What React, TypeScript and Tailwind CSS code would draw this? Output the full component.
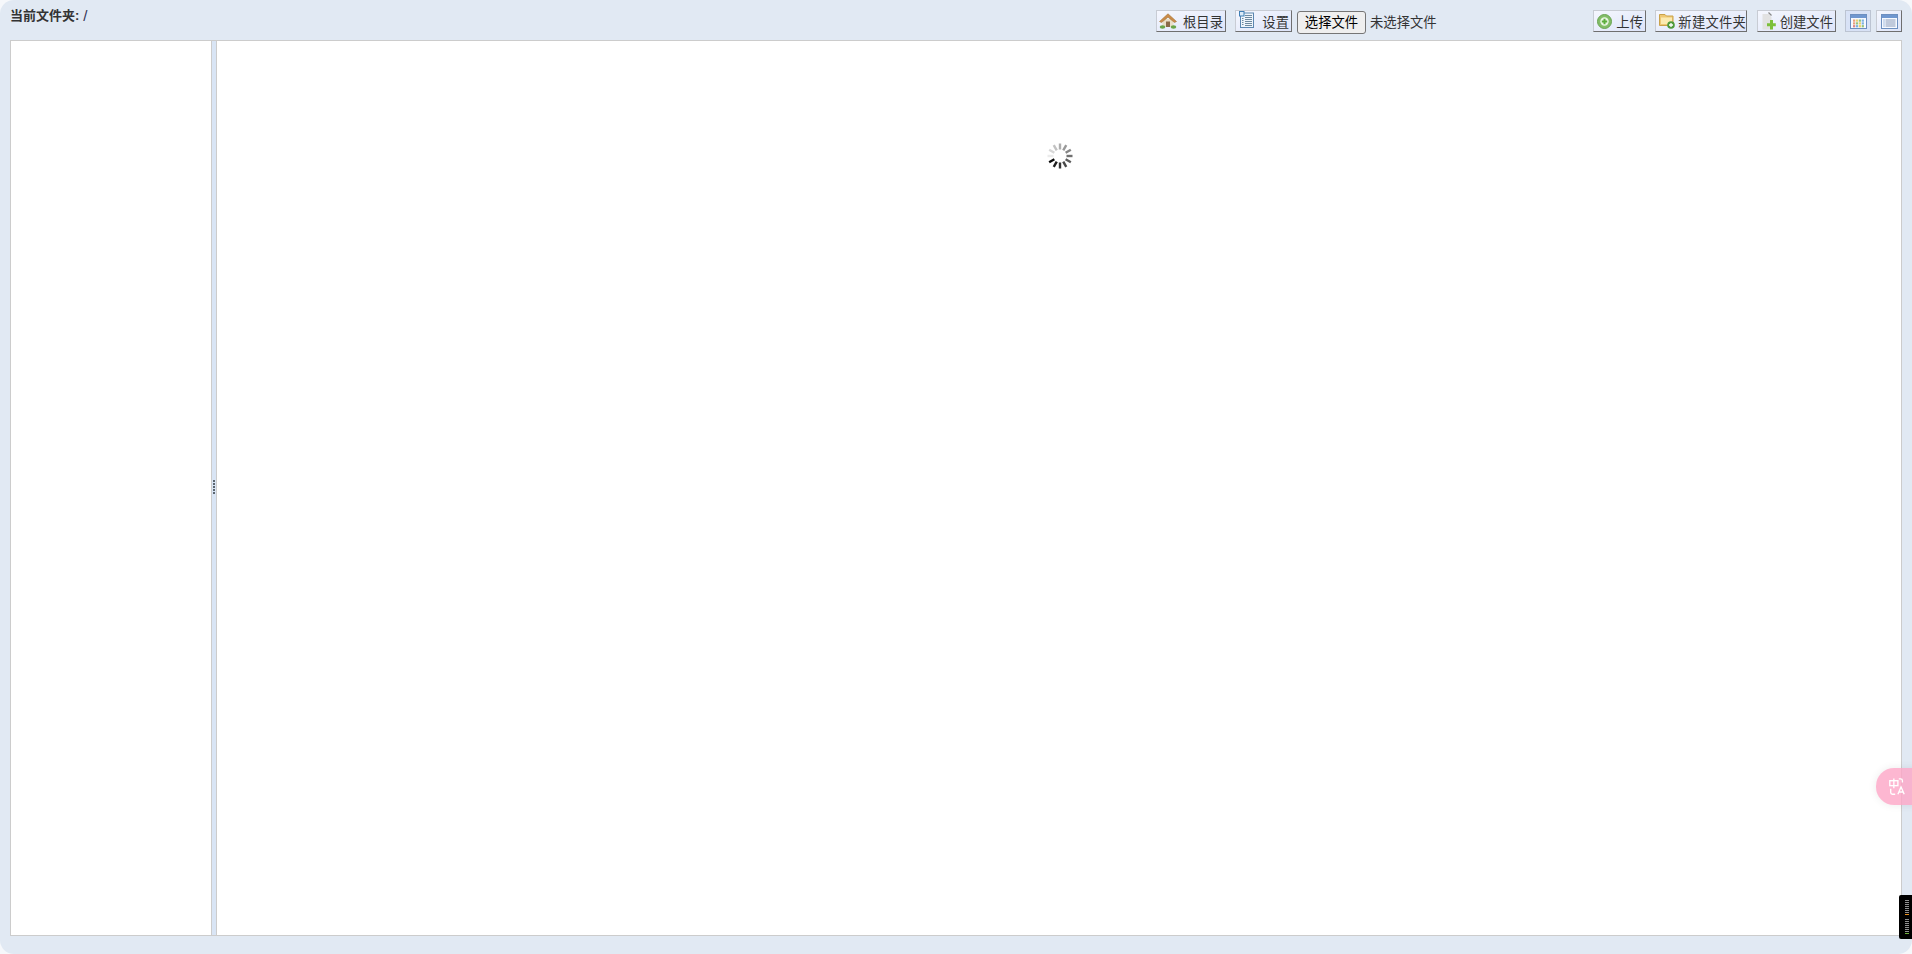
import React from "react";

const font = { fontFamily: '"Liberation Sans","Noto Sans CJK SC",sans-serif' };

function Home() {
  return (
    <svg width="18" height="16" viewBox="0 0 18 16" className="shrink-0">
      <rect x="3.5" y="6" width="11" height="8" fill="#eadfc8" />
      <rect x="7" y="8.5" width="4" height="5.5" fill="#8a6a48" />
      <path d="M0.5 8.5 L9 0.8 L17.5 8.5 L15.5 9.5 L9 4.2 L2.5 9.5 Z" fill="#c98a4a" stroke="#a87838" strokeWidth="0.6" />
      <ellipse cx="3.5" cy="14" rx="2.8" ry="1.7" fill="#6aa548" />
      <ellipse cx="14.5" cy="14" rx="2.8" ry="1.7" fill="#6aa548" />
    </svg>
  );
}
function Settings() {
  return (
    <svg width="15" height="17" viewBox="0 0 15 17" className="shrink-0">
      <rect x="1.5" y="2" width="13" height="14.5" fill="#eef4fb" stroke="#5c87b0" />
      <rect x="0.5" y="0.5" width="4.5" height="4.5" fill="#dcebf8" stroke="#3f7fb5" />
      <path d="M6 4.5h7M6 6.5h7M6 8.5h7M6 10.5h7M6 12.5h7M6 14.5h7M3 7.5h1.5M3 9.5h1.5M3 11.5h1.5M3 13.5h1.5" stroke="#6f8a9f" />
    </svg>
  );
}
function Upload() {
  return (
    <svg width="15" height="15" viewBox="0 0 15 15" className="shrink-0">
      <circle cx="7.5" cy="7.5" r="7" fill="#83bd68" stroke="#6aa452" />
      <circle cx="7.5" cy="7.5" r="4.2" fill="#eaf6e4" />
      <path d="M7.5 4.8v5.4M4.8 7.5h5.4" stroke="#5cae3c" strokeWidth="2" />
    </svg>
  );
}
function NewFolder() {
  return (
    <svg width="16" height="16" viewBox="0 0 16 16" className="shrink-0">
      <path d="M0.5 1.5h5.5l1.5 1.5h6.5v9.5H0.5Z" fill="#eec872" stroke="#c9a24a" />
      <rect x="2" y="4.5" width="11" height="6.5" fill="#fbeab0" />
      <circle cx="12" cy="12" r="3.8" fill="#4f9a3c" />
      <path d="M12 10v4M10 12h4" stroke="#fff" strokeWidth="1.3" />
    </svg>
  );
}
function NewFile() {
  return (
    <svg width="14" height="18" viewBox="0 0 14 18" className="shrink-0">
      <path d="M0.5 17.5V2h6l3 3v12.5Z" fill="#e2e2e2" />
      <path d="M6.5 0.5l3 3" stroke="#888" strokeWidth="1.2" />
      <path d="M9.5 8v9.5M5 12.7h8.8" stroke="#7cc03a" strokeWidth="3" />
    </svg>
  );
}
function GridView() {
  const c = ["#e88a5c", "#e8c84c", "#7cb85c", "#5ca0d8", "#e88a5c", "#7cb85c", "#e8c84c", "#5ca0d8", "#d86a6a", "#5ca0d8", "#e8c84c", "#7cb85c"];
  return (
    <svg width="17" height="15" viewBox="0 0 17 15">
      <rect x="0.5" y="0.5" width="16" height="14" fill="#f6f9ff" stroke="#6d8fc0" />
      <rect x="1" y="1" width="15" height="3" fill="#6f97d0" />
      {c.map((f, i) => (
        <rect key={i} x={3 + (i % 4) * 2.9} y={5.5 + Math.floor(i / 4) * 2.8} width="2.2" height="2.2" fill={f} opacity="0.8" />
      ))}
    </svg>
  );
}
function ListView() {
  return (
    <svg width="17" height="15" viewBox="0 0 17 15">
      <rect x="0.5" y="0.5" width="16" height="14" fill="#f6f9ff" stroke="#6d8fc0" />
      <rect x="1" y="1" width="15" height="3" fill="#6f97d0" />
      <path d="M4.5 6h10M4.5 8h10M4.5 10h10M4.5 12h10" stroke="#8a9ab8" />
      <path d="M2.5 6h1M2.5 8h1M2.5 10h1M2.5 12h1" stroke="#5a86c0" />
    </svg>
  );
}

function Tool({ icon, label, cls }: { icon: React.ReactNode; label: string; cls: string }) {
  return (
    <div
      className={`flex h-[22px] items-center justify-between border border-t-[#c8ccd4] border-l-[#c8ccd4] border-r-[#6f6f6f] border-b-[#6f6f6f] bg-linear-to-br from-[#f5f7fe] to-[#dde4f9] text-[13.33px] leading-none text-[#333] ${cls}`}
    >
      {icon}
      <span className="pt-[4px]">{label}</span>
    </div>
  );
}

function Spinner() {
  const spokes = Array.from({ length: 12 }, (_, i) => i);
  return (
    <svg width="26" height="26" viewBox="-13 -13 26 26">
      {spokes.map((i) => {
        const a = (i * 30 * Math.PI) / 180;
        const order = (8 - i + 12) % 12;
        const grey = Math.round(10 + (order / 11) * 225);
        return (
          <line
            key={i}
            x1={Math.sin(a) * 6.5}
            y1={-Math.cos(a) * 6.5}
            x2={Math.sin(a) * 12.5}
            y2={-Math.cos(a) * 12.5}
            stroke={`rgb(${grey},${grey},${grey})`}
            strokeWidth="2.4"
          />
        );
      })}
    </svg>
  );
}

export default function App() {
  return (
    <div style={font} className="relative h-[954px] w-[1912px] overflow-hidden bg-[#f6f8fb]">
      <div className="flex h-full flex-col rounded-[14px] bg-[#e1e9f3] pl-[10px] pr-[10px] pb-[18px]">
        <header className="flex h-[40px] shrink-0 items-start">
          <div className="mt-[8px] flex w-[1146px] shrink-0 items-center text-[13px] leading-[16px] text-[#333]">
            <b>当前文件夹:</b>
            <span className="ml-[4px] text-[15px] text-[#335]">/</span>
          </div>
          <div className="mt-[10px] flex items-start">
            <Tool icon={<Home />} label="根目录" cls="w-[70px] pl-[2px] pr-[2px]" />
            <div className="ml-[9px]">
              <Tool icon={<div className="mb-[3px]"><Settings /></div>} label="设置" cls="w-[57px] pl-[3px] pr-[2px]" />
            </div>
            <button className="ml-[5px] mt-[1px] h-[23px] w-[69px] rounded-[3px] border border-[#767676] bg-[#efefef] text-[13.33px] leading-none text-black">
              选择文件
            </button>
            <span className="ml-[4px] mt-[4px] text-[13.33px] leading-[18px] text-[#333]">未选择文件</span>
          </div>
          <div className="ml-auto mt-[10px] flex items-start">
            <Tool icon={<Upload />} label="上传" cls="w-[53px] pl-[3px] pr-[2px]" />
            <div className="ml-[9px]">
              <Tool icon={<NewFolder />} label="新建文件夹" cls="w-[92px] pl-[3px] pr-0 tracking-[0.2px]" />
            </div>
            <div className="ml-[10px]">
              <Tool icon={<NewFile />} label="创建文件" cls="w-[79px] pl-[4px] pr-[2px]" />
            </div>
            <div className="ml-[9px] flex h-[22px] w-[26px] items-center justify-center border border-[#bcc4d2] bg-[#d8e2f6]">
              <GridView />
            </div>
            <div className="ml-[5px] flex h-[22px] w-[26px] items-center justify-center border border-t-[#c8ccd4] border-l-[#c8ccd4] border-r-[#6f6f6f] border-b-[#6f6f6f] bg-linear-to-br from-[#f5f7fe] to-[#dde4f9]">
              <ListView />
            </div>
          </div>
        </header>
        <main className="flex min-h-0 flex-1 border border-[#cccccc] bg-white">
          <aside className="w-[201px] shrink-0 border-r border-[#cccccc] bg-white" />
          <div className="box-content flex w-[4px] shrink-0 flex-col items-center justify-center gap-[1px] border-r border-[#cccccc] bg-[#d9e5f5] pb-[2px]">
            {[0, 1, 2, 3, 4].map((i) => (
              <span key={i} className="h-[2px] w-[2px] bg-[#5c6670]" />
            ))}
          </div>
          <section className="flex min-w-0 flex-1 justify-center pt-[102px]">
            <div className="ml-[2px]">
              <Spinner />
            </div>
          </section>
        </main>
      </div>

      <div className="absolute left-[1876px] top-[768px] flex h-[37px] w-[60px] items-center rounded-[18px] bg-[#fda5c6]/80 pl-[12px] shadow-[0_0_8px_rgba(0,0,0,0.08)]">
        <svg width="18" height="18" viewBox="0 0 18 20" fill="none" stroke="#fff" strokeWidth="1.5">
          <rect x="1" y="3" width="9" height="5.5" />
          <path d="M5.5 0.5v11" />
          <path d="M2 12v4c0 1 1 2 2 2h3" />
          <path d="M11 1h2c1 0 2 1 2 2v2" />
          <path d="M10 18l3.5-8 3.5 8M11.2 15.5h4.6" />
        </svg>
      </div>

      <div className="absolute left-[1899px] top-[895px] flex h-[44px] w-[13px] flex-col items-start gap-[5px] rounded-l-[2px] bg-black pl-[6px] pt-[5px]">
        <div className="flex flex-col gap-[1px]">
          {[0, 1, 2, 3, 4, 5, 6].map((i) => (
            <span key={i} className="h-[1px] w-[4px] bg-[#8f8f8f]" />
          ))}
          <span className="h-[1px] w-[4px] bg-[#e8901c]" />
        </div>
        <div className="-mt-[1px] flex flex-col gap-[1px]">
          {[0, 1, 2, 3, 4, 5, 6].map((i) => (
            <span key={i} className="h-[1px] w-[4px] bg-[#8f8f8f]" />
          ))}
          <span className="h-[1px] w-[4px] bg-[#6fb03a]" />
        </div>
      </div>
    </div>
  );
}
